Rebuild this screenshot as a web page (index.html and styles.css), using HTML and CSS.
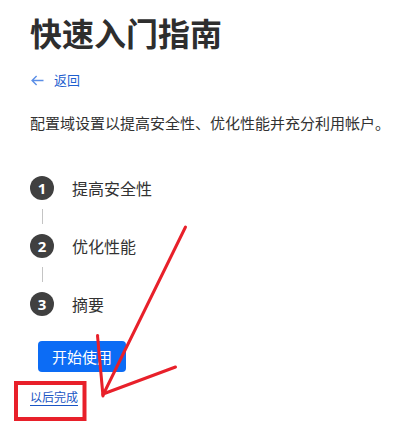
FILE: index.html
```html
<!DOCTYPE html>
<html lang="zh-CN">
<head>
<meta charset="utf-8">
<title>快速入门指南</title>
<link rel="stylesheet" href="styles.css">
</head>
<body>
<main class="page">
  <h1 class="title">快速入门指南</h1>
  <a class="back" href="#">
    <svg class="back-icon" width="13" height="11" viewBox="0 0 13 11" aria-hidden="true">
      <path d="M12.5 5.5H1.2M5.6 1L1.1 5.5 5.6 10" fill="none" stroke="currentColor" stroke-width="1.4"/>
    </svg>
    <span>返回</span>
  </a>
  <p class="desc">配置域设置以提高安全性、优化性能并充分利用帐户。</p>
  <ol class="steps">
    <li class="step"><span class="num">1</span><span class="label">提高安全性</span></li>
    <li class="connector" aria-hidden="true"></li>
    <li class="step"><span class="num">2</span><span class="label">优化性能</span></li>
    <li class="connector" aria-hidden="true"></li>
    <li class="step"><span class="num">3</span><span class="label">摘要</span></li>
  </ol>
  <button class="primary" type="button">开始使用</button>
  <a class="later" href="#">以后完成</a>
</main>
<svg class="annot" width="419" height="431" viewBox="0 0 419 431" aria-hidden="true">
  <rect x="16" y="383" width="68.5" height="36" fill="none" stroke="#e8202a" stroke-width="4"/>
  <g stroke="#e8202a" stroke-width="3" stroke-linecap="round" fill="none">
    <line x1="185.5" y1="227" x2="103" y2="395"/>
    <line x1="97.5" y1="335.5" x2="103" y2="396"/>
    <line x1="175.5" y1="367" x2="103" y2="394"/>
  </g>
</svg>
</body>
</html>
```

FILE: styles.css
```css
html, body {
  margin: 0;
  padding: 0;
  background: #ffffff;
}

body {
  font-family: "Noto Sans CJK SC", "Noto Sans", sans-serif;
  color: #323232;
  position: relative;
  width: 419px;
  height: 431px;
  overflow: hidden;
}

.page {
  display: flex;
  flex-direction: column;
  align-items: flex-start;
  padding: 12px 0 0 30px;
}

.title {
  margin: 0;
  font-size: 32px;
  line-height: 40px;
  font-weight: 700;
  color: #2e2e2e;
}

.back {
  margin-top: 18px;
  display: flex;
  align-items: center;
  gap: 10px;
  height: 20px;
  font-size: 13px;
  line-height: 20px;
  color: #1f5fcf;
  text-decoration: none;
}

.back-icon {
  color: #5b8ee6;
  margin-left: 1px;
}

.desc {
  margin: 22px 0 0;
  font-size: 15px;
  line-height: 22px;
  color: #323232;
  white-space: nowrap;
}

.steps {
  list-style: none;
  margin: 42px 0 0;
  padding: 0;
  display: flex;
  flex-direction: column;
}

.step {
  display: flex;
  align-items: center;
  height: 24px;
}

.num {
  width: 24px;
  height: 24px;
  border-radius: 50%;
  background: #404040;
  color: #ffffff;
  font-family: "Noto Sans", "DejaVu Sans", sans-serif;
  font-weight: 700;
  font-size: 15px;
  line-height: 24px;
  text-align: center;
  flex: none;
}

.label {
  margin-left: 18px;
  font-size: 16px;
  line-height: 24px;
  color: #323232;
}

.connector {
  width: 1px;
  height: 15px;
  margin: 9px 0 10px 12px;
  background: #c4c4c4;
}

.primary {
  margin-top: 25px;
  margin-left: 8px;
  height: 31px;
  padding: 0 14px;
  border: none;
  border-radius: 4px;
  background: #0c6cf5;
  color: #ffffff;
  font-family: "Noto Sans CJK SC", sans-serif;
  font-size: 15px;
  line-height: 31px;
  cursor: pointer;
}

.later {
  margin-top: 16px;
  font-size: 12px;
  line-height: 18px;
  color: #1a55c4;
  text-decoration: underline;
  text-underline-offset: 3px;
}

.annot {
  position: absolute;
  left: 0;
  top: 0;
  pointer-events: none;
}
```
